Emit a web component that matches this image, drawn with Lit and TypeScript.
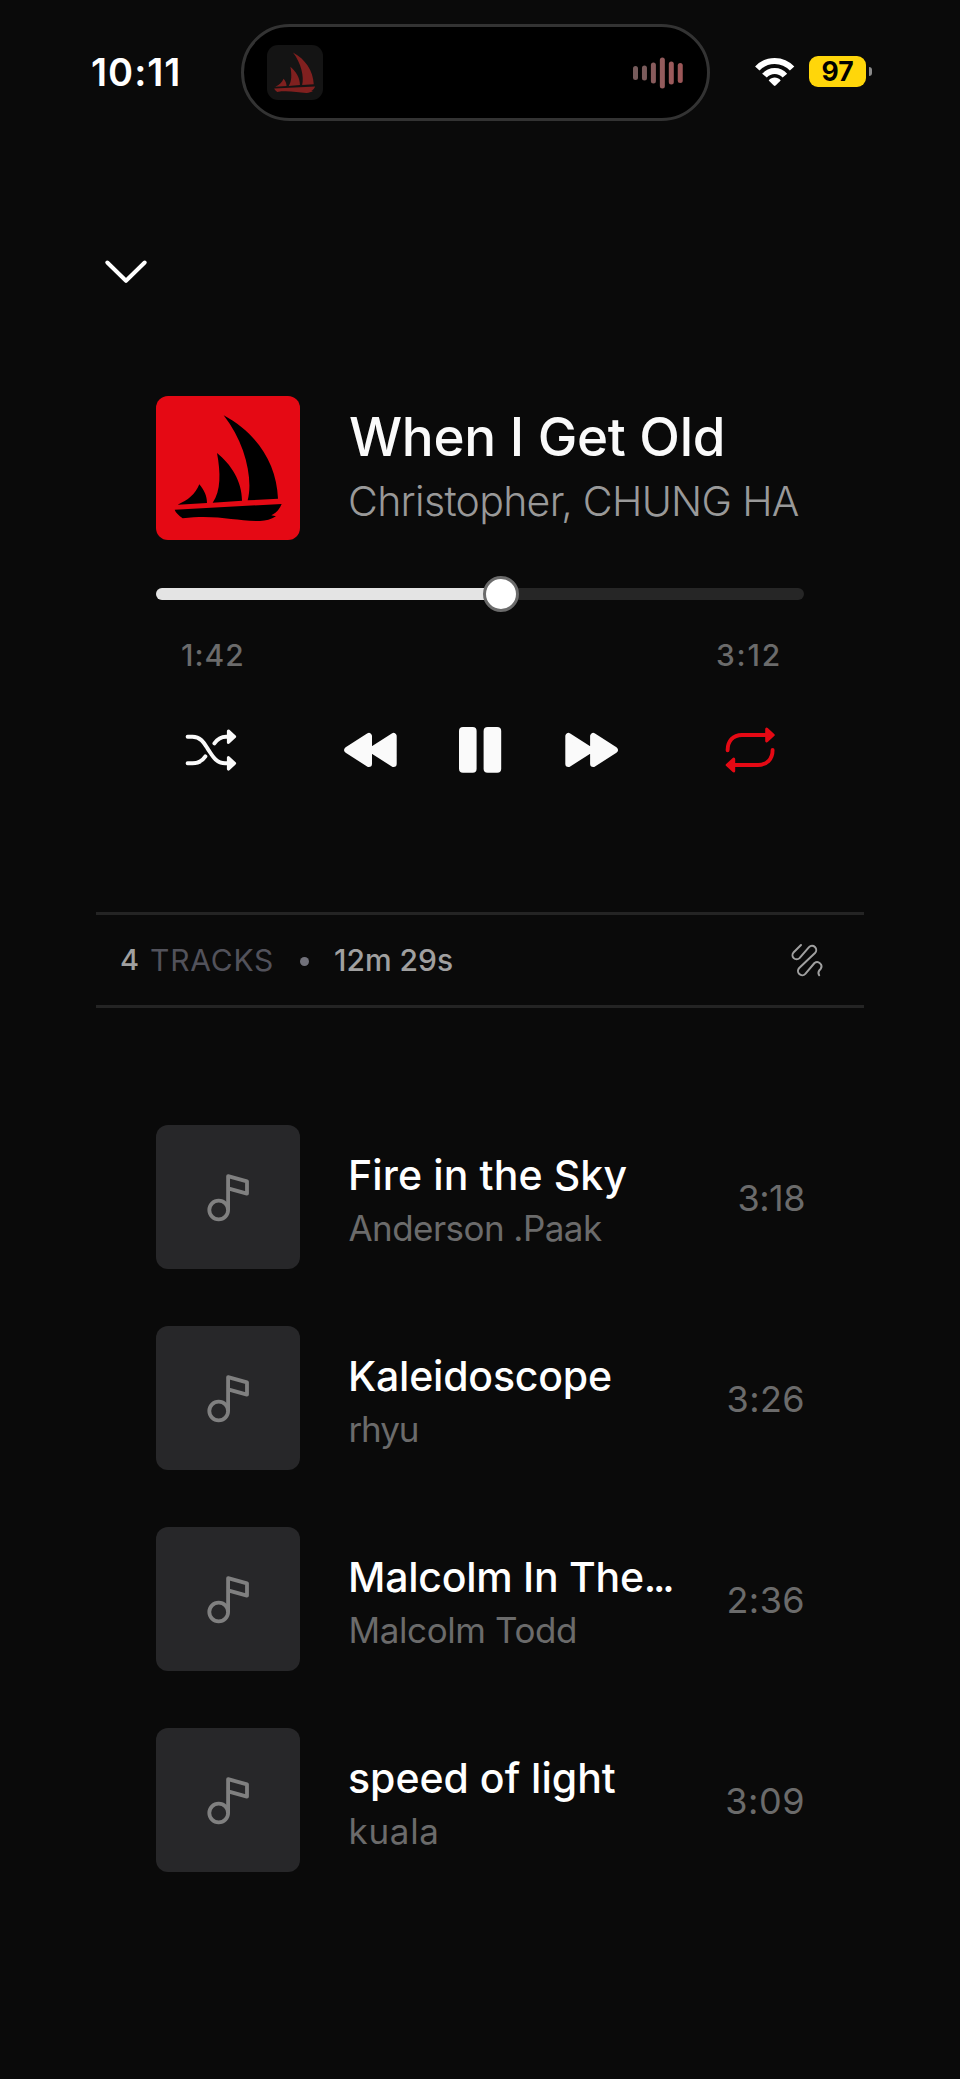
import { LitElement, html, css, svg } from 'lit';
import { customElement, property } from 'lit/decorators.js';

interface Track {
  title: string;
  more?: boolean;
  artist: string;
  length: string;
  // letter spacing in px for title, artist and length
  spacing: [number, number, number];
}

const TRACKS: Track[] = [
  { title: 'Fire in the Sky', artist: 'Anderson .Paak', length: '3:18', spacing: [0.13, -0.55, -0.5] },
  { title: 'Kaleidoscope', artist: 'rhyu', length: '3:26', spacing: [-0.2, -1.1, 0.4] },
  { title: 'Malcolm In The', more: true, artist: 'Malcolm Todd', length: '2:36', spacing: [-0.26, -0.4, 0.4] },
  { title: 'speed of light', artist: 'kuala', length: '3:09', spacing: [0, 0.7, 0.5] },
];

const BARS = [14, 15, 21, 31, 23, 20];
const BAR_COLORS = ['#765b5b', '#7b5b5b', '#885b5c', '#935b5c', '#9b5a5b', '#9c5758'];

const boat = svg`
  <path d="M203 58C300 110 362 200 366 308L275 313C292 250 268 140 203 58Z"/>
  <path d="M183 171C225 205 258 255 258 314L170 320C195 285 194 230 183 171Z"/>
  <path d="M130 265C145 284 153 300 153 321L65 326C95 313 118 295 130 265Z"/>
  <path d="M56 341L377 324C370 342 358 352 346 358L360 361C345 370 330 375 312 375C240 376 180 354 80 367C68 358 59 350 56 341Z"/>`;

@customElement('status-bar')
class StatusBar extends LitElement {
  static styles = css`
    :host { display: block; }
    .bar { display: flex; align-items: center; height: 97px; padding: 24px 88px 0 91px; color: #fff; }
    .time { width: 150px; margin-bottom: 2px; font-size: 38px; font-weight: 600; line-height: 48px; letter-spacing: 1px; }
    .island {
      display: flex; align-items: center; justify-content: space-between; box-sizing: border-box;
      width: 469px; height: 97px; padding: 0 24px 0 23px; border: 3px solid #333; border-radius: 49px; background: #000;
    }
    .art { width: 56px; height: 55px; border-radius: 11px; background: #141414; fill: #80201f; }
    .art svg { display: block; width: 55.2px; height: 55.2px; }
    .wifi { margin: 0 0 2px 45px; fill: none; stroke: #fff; stroke-width: 6; }
    .battery {
      width: 57px; height: 31px; margin: 0 0 2px 14px; border-radius: 9px; background: #ffd60a; color: #000;
      font-size: 26.5px; font-weight: 700; line-height: 31px; text-align: center;
    }
    .nub { width: 3px; height: 9px; margin: 0 0 2px 3px; border-radius: 0 3px 3px 0; background: #8a8a8a; }
  `;

  render() {
    return html`<div class="bar">
      <div class="time">10:11</div>
      <div class="island">
        <div class="art"><svg viewBox="0 0 432 432">${boat}</svg></div>
        <svg width="50" height="32" viewBox="0 0 50 32">
          ${BARS.map((h, i) => svg`<rect x=${i * 8.95} y=${16 - h / 2} width="5" height=${h} rx="2.5" fill=${BAR_COLORS[i]}/>`)}
        </svg>
      </div>
      <svg class="wifi" width="40" height="30" viewBox="0 0 40 30">
        <path d="M2.3 11.6A23.5 23.5 0 0 1 37.1 11.6"/>
        <path d="M9.5 18.6A13.5 13.5 0 0 1 29.9 18.6"/>
        <path d="M13.7 23.4C17 19.6 22.4 19.6 25.7 23.4L20.6 28.6Q19.7 29.3 18.8 28.6Z" fill="#fff" stroke="none"/>
      </svg>
      <div class="battery">97</div>
      <div class="nub"></div>
    </div>`;
  }
}

@customElement('now-playing')
class NowPlaying extends LitElement {
  @property({ type: Number }) progress = 53.2;

  static styles = css`
    :host { display: block; padding: 0 156px; }
    svg { display: block; }
    .song { display: flex; gap: 48px; height: 144px; }
    .cover { flex: none; width: 144px; height: 144px; border-radius: 12px; background: #e50914; }
    .text { padding-top: 9px; white-space: nowrap; }
    .title { font-size: 53px; font-weight: 500; line-height: 64px; letter-spacing: -0.3px; color: #fafafa; padding-left: 1px; }
    .artist { font-size: 41px; font-weight: 300; line-height: 64px; letter-spacing: -0.7px; color: #999; }
    .slider { position: relative; height: 12px; margin-top: 48px; border-radius: 6px; background: #262626; }
    .fill { height: 12px; border-radius: 6px; background: #e4e4e4; }
    .thumb {
      position: absolute; top: -12px; width: 36px; height: 36px; margin-left: -18px; box-sizing: border-box;
      border: 3px solid #6b6b6b; border-radius: 50%; background: #fff;
    }
    .times {
      display: flex; justify-content: space-between; margin-top: 35px; padding: 0 22px 0 25px;
      font-size: 30px; font-weight: 500; line-height: 40px; letter-spacing: 1px; color: #6b6b6b;
      font-feature-settings: "calt" 0;
    }
    .total { letter-spacing: 1.8px; }
    .controls { display: flex; justify-content: center; gap: 50px; margin-top: 45px; color: #fafafa; }
    .side-left { margin-right: 50px; }
    .side-right { margin-left: 50px; color: #e50914; }
    .line { fill: none; stroke: currentColor; stroke-width: 3.9; stroke-linecap: round; stroke-linejoin: round; }
    .head { fill: currentColor; stroke: currentColor; stroke-width: 3; stroke-linejoin: round; }
    .solid { fill: currentColor; stroke: currentColor; stroke-width: 6.4; stroke-linejoin: round; }
  `;

  render() {
    return html`
      <div class="song">
        <div class="cover"><svg viewBox="0 0 432 432">${boat}</svg></div>
        <div class="text">
          <div class="title">When I Get Old</div>
          <div class="artist">Christopher, CHUNG HA</div>
        </div>
      </div>
      <div class="slider">
        <div class="fill" style="width:${this.progress}%"></div>
        <div class="thumb" style="left:${this.progress}%"></div>
      </div>
      <div class="times"><span>1:42</span><span class="total">3:12</span></div>
      <div class="controls">
        <svg class="side-left" width="60" height="60">
          <path class="line" d="M7.6 16.7H12.5C21.5 16.7 25 24.7 28.4 29.8C32 35.2 36 43.3 45 43.3H48M7.6 43.3H12.5C18.8 43.3 22.8 40.4 25.4 36.4M34.4 23.4C37 19.6 40.8 16.7 46 16.7H48"/>
          <path class="head" d="M48.4 10.9L54.6 16.7L48.4 22.5ZM48.4 37.5L54.6 43.3L48.4 49.1Z"/>
        </svg>
        <svg width="60" height="60"><path class="solid" d="M7.4 30L28.8 16.2V43.8ZM32 30L53.5 16.2V43.8Z"/></svg>
        <svg width="60" height="60" fill="currentColor">
          <rect x="9" y="7" width="17.6" height="45.7" rx="4"/><rect x="33.6" y="7" width="17.6" height="45.7" rx="4"/>
        </svg>
        <svg width="60" height="60"><path class="solid" d="M54.7 30L33.3 16.2V43.8ZM30 30L8.5 16.2V43.8Z"/></svg>
        <svg class="side-right" width="60" height="60">
          <path class="line" d="M7.6 30.2C7.6 21 13 15 22 15H47M52.6 30C52.6 39 47 45 38 45H14"/>
          <path class="head" d="M46.7 9.1L53.2 15L46.7 20.9ZM13.7 39.1L7.2 45L13.7 50.9Z"/>
        </svg>
      </div>`;
  }
}

@customElement('queue-summary')
class QueueSummary extends LitElement {
  static styles = css`
    :host { display: block; padding: 0 96px; }
    .row {
      display: flex; align-items: center; box-sizing: border-box; height: 96px; padding: 0 38px 0 24px;
      border-top: 3px solid #242424; border-bottom: 3px solid #242424;
      font-size: 30px; font-weight: 500; line-height: 40px; color: #a0a0a0;
    }
    .count { width: 30px; font-size: 29px; }
    .label { width: 150px; font-weight: 400; letter-spacing: 0.78px; color: #52525b; }
    .dot { width: 9px; height: 9px; margin: 3px 25px 0 0; border-radius: 50%; background: #71717a; }
    .icon { margin-left: auto; fill: none; stroke: #a0a0a0; stroke-width: 2; stroke-linecap: round; stroke-linejoin: round; }
  `;

  render() {
    return html`<div class="row">
      <span class="count">4</span>
      <span class="label">TRACKS</span>
      <span class="dot"></span>
      <span>12m 29s</span>
      <svg class="icon" width="40" height="40">
        <path d="M15 5L7.7 12.3A4.1 4.1 0 0 0 13.5 18.1L23 7.1A4.2 4.2 0 0 1 29 13L13.2 28A4.2 4.2 0 0 0 19.3 33.9L28.5 23A4.3 4.3 0 0 1 34.6 28.9C31.8 31.4 31.8 33 33.2 35.2"/>
      </svg>
    </div>`;
  }
}

@customElement('track-list')
class TrackList extends LitElement {
  static styles = css`
    :host { display: flex; flex-direction: column; gap: 57px; padding: 0 156px; }
    .track { display: flex; height: 144px; white-space: nowrap; }
    .tile { flex: none; width: 144px; height: 144px; margin-right: 48px; border-radius: 12px; background: #272729; }
    .tile svg { display: block; fill: none; stroke: #808080; stroke-width: 3.8; stroke-linejoin: round; }
    .text { flex: none; width: 326px; padding-top: 23px; }
    .title { font-size: 41px; font-weight: 500; line-height: 54px; color: #fff; }
    .more { letter-spacing: -3.2px; }
    .artist { padding-left: 0.5px; font-size: 35px; line-height: 53px; color: #6b6b6b; }
    .length { margin-left: auto; margin-right: -1px; font-size: 36px; line-height: 147px; color: #6b6b6b; font-feature-settings: "calt" 0; }
  `;

  render() {
    return TRACKS.map(
      (t) => html`<div class="track">
        <div class="tile">
          <svg width="144" height="144">
            <circle cx="62.7" cy="85" r="9.4"/>
            <path d="M72.1 85V51.2L91 56.3V68.6L72.1 63.4"/>
          </svg>
        </div>
        <div class="text">
          <div class="title" style="letter-spacing:${t.spacing[0]}px">${t.title}${t.more ? html`<span class="more">...</span>` : ''}</div>
          <div class="artist" style="letter-spacing:${t.spacing[1]}px">${t.artist}</div>
        </div>
        <div class="length" style="letter-spacing:${t.spacing[2]}px">${t.length}</div>
      </div>`,
    );
  }
}

@customElement('app-root')
class AppRoot extends LitElement {
  static styles = css`
    :host {
      display: flex; flex-direction: column; box-sizing: border-box; width: 960px; height: 2079px; overflow: hidden;
      background: #0a0a0a; font-family: Inter, "Liberation Sans", sans-serif;
    }
    .collapse { display: block; margin: 120px 0 0 96px; fill: none; stroke: #fff; stroke-width: 4; stroke-linecap: round; stroke-linejoin: round; }
    now-playing { margin-top: 95px; }
    queue-summary { margin-top: 132px; }
    track-list { margin-top: 117px; }
  `;

  render() {
    return html`
      <status-bar></status-bar>
      <svg class="collapse" width="60" height="60"><path d="M11.3 21.5L30 39.8L48.7 21.5"/></svg>
      <now-playing></now-playing>
      <queue-summary></queue-summary>
      <track-list></track-list>`;
  }
}
